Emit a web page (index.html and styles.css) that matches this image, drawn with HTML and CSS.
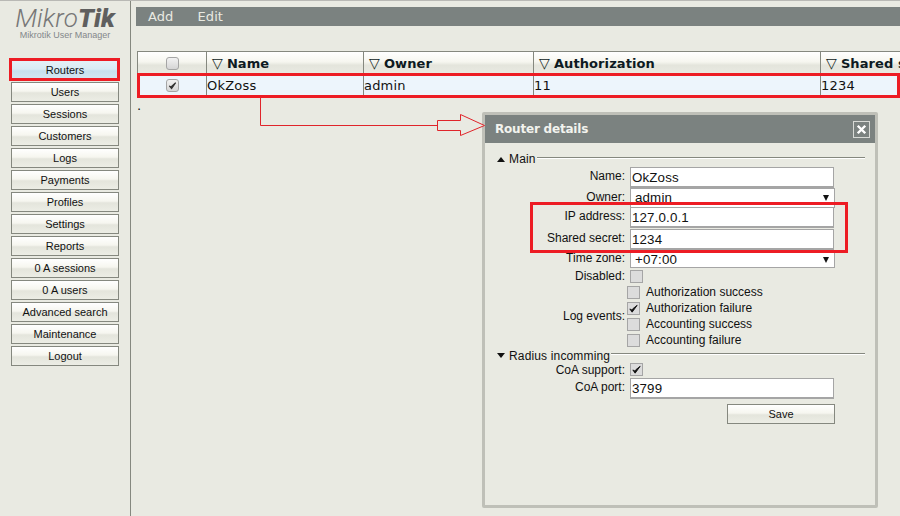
FILE: index.html
```html
<!DOCTYPE html>
<html lang="en">
<head>
<meta charset="utf-8">
<title>Mikrotik User Manager</title>
<link rel="stylesheet" href="styles.css">
</head>
<body>
<div class="page">
  <aside class="sidebar">
    <div class="logo"><span class="logo-thin">Mikro</span><span class="logo-bold">Tik</span></div>
    <div class="subtitle">Mikrotik User Manager</div>
    <nav class="menu">
      <div class="btn active">Routers</div>
      <div class="btn">Users</div>
      <div class="btn">Sessions</div>
      <div class="btn">Customers</div>
      <div class="btn">Logs</div>
      <div class="btn">Payments</div>
      <div class="btn">Profiles</div>
      <div class="btn">Settings</div>
      <div class="btn">Reports</div>
      <div class="btn">0 A sessions</div>
      <div class="btn">0 A users</div>
      <div class="btn">Advanced search</div>
      <div class="btn">Maintenance</div>
      <div class="btn">Logout</div>
    </nav>
  </aside>
  <main class="content">
    <div class="toolbar"><span>Add</span><span>Edit</span></div>
    <div class="table">
      <div class="thead">
        <div class="c c0"><span class="cb rounded"></span></div>
        <div class="c c1"><span class="tri">▽</span>Name</div>
        <div class="c c2"><span class="tri">▽</span>Owner</div>
        <div class="c c3"><span class="tri">▽</span>Authorization</div>
        <div class="c c4"><span class="tri">▽</span>Shared secret</div>
      </div>
      <div class="trow">
        <div class="c c0"><span class="cb rounded"><svg viewBox="0 0 12 12"><path d="M2.5 6.5 5 9.5 9.5 3 5.5 6.5 4.5 7.5Z" fill="#333" stroke="#333" stroke-width="1.2"/></svg></span></div>
        <div class="c c1">OkZoss</div>
        <div class="c c2">admin</div>
        <div class="c c3">11</div>
        <div class="c c4">1234</div>
      </div>
    </div>
    <div class="dot">.</div>
  </main>
</div>

<section class="dialog">
  <header class="dialog-head">
    <span>Router details</span>
    <span class="close"><svg viewBox="0 0 16 16"><path d="M4 4 12 12M12 4 4 12" stroke="#fff" stroke-width="2.6"/></svg></span>
  </header>
  <div class="dialog-body">
    <div class="legend l-main"><span class="arrow-up"></span><span class="legend-text">Main</span><span class="rule"></span></div>
    <div class="row r21"><label>Name:</label><div class="input">OkZoss</div></div>
    <div class="row r19"><label>Owner:</label><div class="input select">admin<span class="caret"></span></div></div>
    <div class="row r22"><label>IP address:</label><div class="input">127.0.0.1</div></div>
    <div class="row r21"><label>Shared secret:</label><div class="input">1234</div></div>
    <div class="row r20"><label>Time zone:</label><div class="input select short">+07:00<span class="caret"></span></div></div>
    <div class="row r14"><label>Disabled:</label><span class="cb"></span></div>
    <div class="row logs"><label>Log events:</label>
      <div class="checks">
        <div class="check"><span class="cb"></span>Authorization success</div>
        <div class="check"><span class="cb"><svg viewBox="0 0 12 12"><path d="M2 6.5 4.5 10 10 2.5 5 6.5 4 7.5Z" fill="#111" stroke="#111"/></svg></span>Authorization failure</div>
        <div class="check"><span class="cb"></span>Accounting success</div>
        <div class="check"><span class="cb"></span>Accounting failure</div>
      </div>
    </div>
    <div class="legend l-radius"><span class="arrow-down"></span><span class="legend-text">Radius incomming</span><span class="rule"></span></div>
    <div class="row r15"><label>CoA support:</label><span class="cb"><svg viewBox="0 0 12 12"><path d="M2 6.5 4.5 10 10 2.5 5 6.5 4 7.5Z" fill="#111" stroke="#111"/></svg></span></div>
    <div class="row r26"><label>CoA port:</label><div class="input">3799</div></div>
    <div class="save-row"><div class="btn save">Save</div></div>
  </div>
</section>

<div class="mark mark-routers"></div>
<div class="mark mark-row"></div>
<div class="mark mark-ip"></div>
<svg class="callout" viewBox="0 0 900 516">
  <path d="M260.5 97V125.5H437.5" fill="none" stroke="#e0252b"/>
  <path d="M437.5 120.5H460.5V114.5L484.5 125.5 460.5 135.5V130.5H437.5Z" fill="#e9eae2" stroke="#e0252b"/>
</svg>
</body>
</html>
```
FILE: styles.css
```css
* { box-sizing: border-box; }
html, body { margin: 0; padding: 0; width: 900px; height: 516px; overflow: hidden; background: #e9eae2; }
body { font-family: "Liberation Sans", Arial, sans-serif; font-size: 12px; color: #111; position: relative; border-top: 1px solid #b9b9b5; }

.page { display: flex; height: 515px; }
.sidebar { width: 131px; flex: none; border-right: 1px solid #85887f; padding-top: 7px; }
.logo { font-family: Roboto, sans-serif; font-style: italic; font-size: 26px; line-height: 20px; height: 20px; text-align: center; color: #777; letter-spacing: 0.1px; }
.logo-thin { font-weight: 300; }
.logo-bold { font-weight: 900; color: #5f5f5f; }
.subtitle { font-size: 9px; line-height: 12px; text-align: center; color: #83878a; margin-top: 1px; }
.menu { display: flex; flex-direction: column; gap: 2px; margin: 19px 0 0 11px; width: 108px; }
.btn { height: 20px; line-height: 19px; text-align: center; font-size: 11px; color: #111; border: 1px solid #85887f; background: linear-gradient(#ffffff 0, #f6f6ef 45%, #e4e5dc 55%, #ecede5 100%); }
.btn.active { background: linear-gradient(#e4f1f7 0, #d9ebf4 45%, #c7e0ee 55%, #d3e7f1 100%); }

.content { flex: 1; min-width: 0; padding: 6px 0 0 5px; font-family: "DejaVu Sans", Verdana, sans-serif; overflow: hidden; }
.toolbar { height: 19px; background: #7b8280; color: #e9eae2; font-size: 13px; line-height: 19px; display: flex; gap: 24px; padding-left: 12px; letter-spacing: 0.1px; }
.table { margin: 25px 0 0 1px; border-top: 1px solid #85887f; }
.thead, .trow { display: flex; }
.thead { height: 22px; background: linear-gradient(#ffffff 0, #f6f6ef 45%, #e4e5dc 60%, #e9eae2 100%); font-weight: 700; font-size: 13px; line-height: 23px; letter-spacing: 0.1px; color: #0d1a22; }
.trow { height: 22px; background: #edf5fc; font-size: 13px; line-height: 24px; letter-spacing: 0.2px; color: #111; }
.c { flex: none; border-left: 1px solid #85887f; overflow: hidden; white-space: nowrap; }
.thead .c { padding-left: 5px; }
.thead .c0, .trow .c0 { display: flex; align-items: center; justify-content: center; padding: 0; }
.c0 { width: 69px; }
.c1 { width: 157px; }
.c2 { width: 170px; }
.c3 { width: 287px; }
.c4 { flex: 1; min-width: 0; }
.tri { font-weight: 400; margin-right: 4px; font-size: 14px; line-height: 20px; }
.dot { font-size: 13px; line-height: 14px; margin: 3px 0 0 1px; }

.cb { display: inline-flex; flex: none; width: 13px; height: 13px; background: #dcdcdc; border: 1px solid #a5a5a5; }
.cb svg { width: 100%; height: 100%; display: block; }
.cb.rounded { border-radius: 3px; background: linear-gradient(#f2f2f2, #d5d5d5); }

.dialog { position: absolute; left: 482px; top: 111px; width: 396px; height: 396px; background: #e9eae2; border: 3px solid #bfc0b8; border-radius: 2px; }
.dialog-head { height: 28px; background: #7b8280; color: #f2f3ee; font-family: "DejaVu Sans", sans-serif; font-weight: 700; font-size: 12px; letter-spacing: -0.2px; line-height: 27px; padding: 0 5px 0 10px; display: flex; justify-content: space-between; align-items: center; }
.close { width: 17px; height: 17px; border: 1px solid #d8dad6; display: block; }
.close svg { width: 15px; height: 15px; display: block; }
.dialog-body { padding: 8px 10px 0 12px; }

.legend { display: flex; align-items: center; height: 16px; font-size: 12px; color: #111; }
.legend-text { margin: 0 0 0 4px; letter-spacing: 0.15px; }
.rule { flex: 1; border-top: 1px solid #85887f; border-bottom: 1px solid #fff; height: 2px; margin: -3px 0 0 1px; }
.arrow-up { width: 0; height: 0; border: 4.5px solid transparent; border-top: 0; border-bottom: 5px solid #111; }
.arrow-down { width: 0; height: 0; border: 4.5px solid transparent; border-bottom: 0; border-top: 5px solid #111; }

.row { display: flex; align-items: flex-start; }
.row > label { width: 133px; flex: none; text-align: right; padding-right: 5px; line-height: 19px; }
.r14 { height: 14px; } .r15 { height: 15px; } .r19 { height: 19px; } .r20 { height: 20px; }
.r21 { height: 21px; } .r22 { height: 22px; } .r26 { height: 26px; }
.r20 > label { line-height: 17px; }
.r14 > label { line-height: 12px; }
.r15 > label { line-height: 14px; }
.input { width: 204px; height: 21px; background: #fff; border: 1px solid #a5a5a5; border-bottom-width: 2px; font-size: 13.33px; line-height: 19px; padding-left: 1px; letter-spacing: 0.15px; color: #111; position: relative; }
.select { width: 205px; height: 20px; padding-left: 4px; line-height: 17px; border-bottom-width: 1px; }
.short { height: 18px; }
.caret { position: absolute; right: 5px; top: 6px; width: 0; height: 0; border: 3px solid transparent; border-bottom: 0; border-top: 6px solid #111; }

.logs { height: 64px; align-items: center; }
.logs > label { width: 130px; padding-right: 2px; }
.checks { display: flex; flex-direction: column; }
.check { display: flex; align-items: center; gap: 6px; height: 16px; }

.l-radius { height: 15px; }
.save-row { display: flex; padding-left: 230px; }
.save { width: 108px; }

.mark { position: absolute; border: 3px solid #ed1c24; }
.mark-routers { left: 9px; top: 57px; width: 111px; height: 23px; }
.mark-row { left: 137px; top: 72px; width: 763px; height: 25px; }
.mark-ip { left: 530px; top: 201px; width: 318px; height: 51px; }
.callout { position: absolute; left: 0; top: -1px; width: 900px; height: 516px; pointer-events: none; }
```
